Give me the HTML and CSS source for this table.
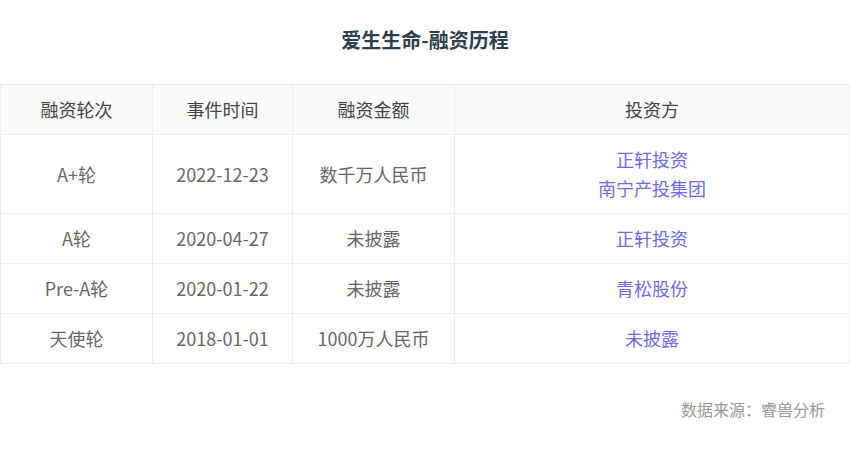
FILE: index.html
```html
<!DOCTYPE html>
<html lang="zh-CN">
<head>
    <meta charset="UTF-8">
    <meta name="viewport" content="width=device-width, initial-scale=1.0">
    <title>爱生生命-融资历程</title>
    <link rel="stylesheet" href="styles.css">
</head>
<body>
    <div class="page">
        <h2 class="title">爱生生命-融资历程</h2>

        <table class="rounds">
            <thead>
                <tr>
                    <th class="col-round">融资轮次</th>
                    <th class="col-date">事件时间</th>
                    <th class="col-amount">融资金额</th>
                    <th>投资方</th>
                </tr>
            </thead>
            <tbody>
                <tr>
                    <td>A+轮</td>
                    <td>2022-12-23</td>
                    <td>数千万人民币</td>
                    <td class="investor">
                        <a href="#">正轩投资</a><br>
                        <a href="#">南宁产投集团</a>
                    </td>
                </tr>
                <tr>
                    <td>A轮</td>
                    <td>2020-04-27</td>
                    <td>未披露</td>
                    <td class="investor"><a href="#">正轩投资</a></td>
                </tr>
                <tr>
                    <td>Pre-A轮</td>
                    <td>2020-01-22</td>
                    <td>未披露</td>
                    <td class="investor"><a href="#">青松股份</a></td>
                </tr>
                <tr>
                    <td>天使轮</td>
                    <td>2018-01-01</td>
                    <td>1000万人民币</td>
                    <td class="investor"><a href="#">未披露</a></td>
                </tr>
            </tbody>
        </table>

        <div class="source">数据来源：睿兽分析</div>
    </div>
</body>
</html>
```

FILE: styles.css
```css
body {
    margin: 0;
    font-family: "Noto Sans CJK SC", "Noto Sans", sans-serif;
    background-color: #fff;
}

.page {
    width: 850px;
}

.title {
    margin: 0;
    padding-top: 26px;
    height: 84px;
    box-sizing: border-box;
    text-align: center;
    font-size: 20px;
    line-height: 28px;
    font-weight: bold;
    color: #2f3e4e;
}

.rounds {
    width: 850px;
    border-collapse: collapse;
    table-layout: fixed;
    font-size: 18px;
}

.rounds th,
.rounds td {
    border: 1px solid #ececf2;
    text-align: center;
    padding: 10px 0;
    line-height: 29px;
    font-weight: normal;
}

.rounds th {
    background-color: #fafafa;
    color: #444;
    height: 28px;
    padding: 10px 0;
}

.rounds td {
    color: #666;
}

.col-round {
    width: 151px;
}

.col-date {
    width: 139px;
}

.col-amount {
    width: 161px;
}

.investor a {
    color: #6c6cf2;
    text-decoration: none;
}

.source {
    margin-top: 33px;
    padding-right: 25px;
    text-align: right;
    font-size: 16px;
    color: #999;
}
```
